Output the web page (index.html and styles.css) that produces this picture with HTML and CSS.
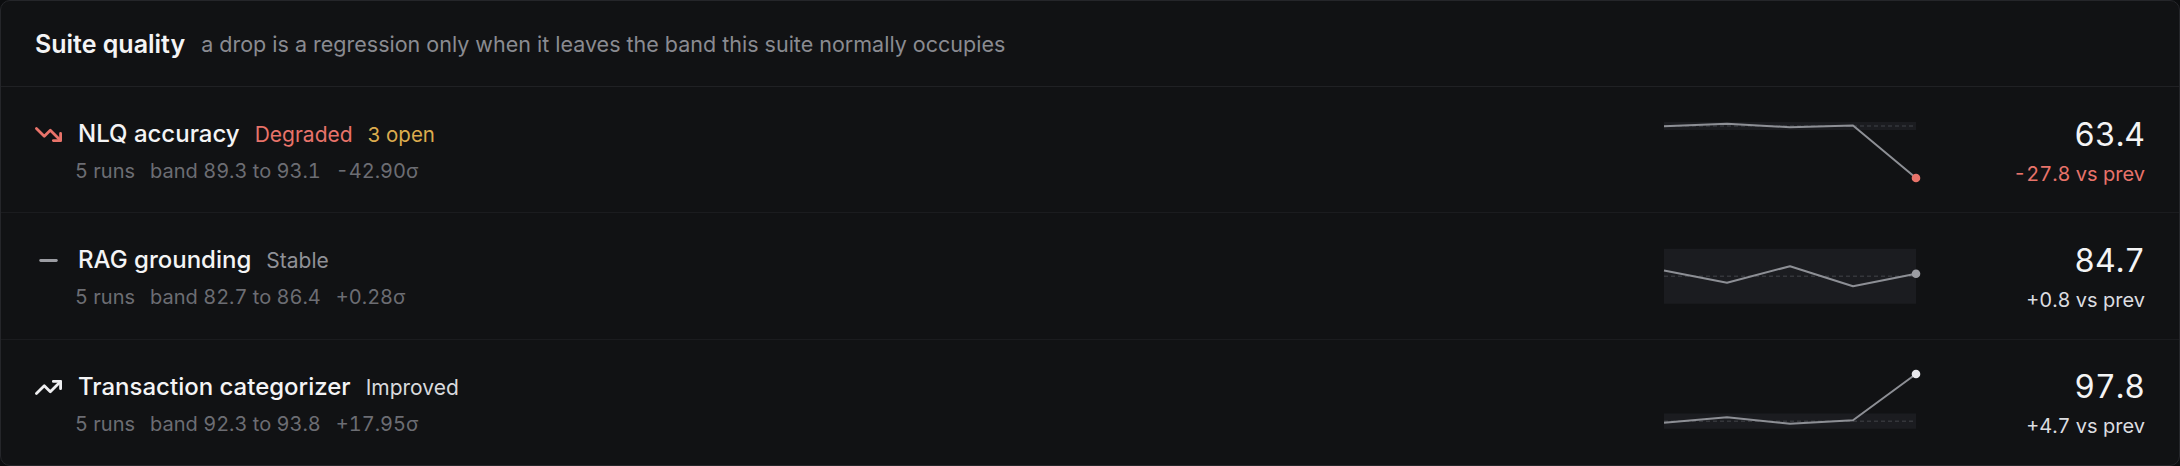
FILE: index.html
```html
<html>
	<head>
		<meta charset="utf-8">
		<link rel="stylesheet" href="styles.css">
	</head>
	<body>
		<div class="card">
			<div class="card-head">
				<span class="card-title">Suite quality</span>
				<span class="card-sub">a drop is a regression only when it leaves the band this suite normally occupies</span>
			</div>

			<!-- NLQ -->
			<div class="suite">
				<div class="suite-main">
					<svg class="trend trend-bad" viewBox="0 0 24 24"><polyline points="22 17 13.5 8.5 8.5 13.5 2 7"/><polyline points="16 17 22 17 22 11"/></svg>
					<div class="suite-line">
						<span class="suite-name">NLQ accuracy</span>
						<span class="status status-bad">Degraded</span>
						<span class="open">3 open</span>
					</div>
					<div class="suite-meta"><span>5 runs</span><span>band 89.3 to 93.1</span><span>-42.90σ</span></div>
				</div>
				<svg class="spark" viewBox="0 0 260 64">
					<rect class="band" x="4" y="4" width="252" height="8"/>
					<line class="mid" x1="4" y1="8" x2="256" y2="8"/>
					<polyline class="line" points="4,8.2 67,5.8 130,9.2 193,7.5 256,60"/>
					<circle class="dot-bad" cx="256" cy="60" r="4.3"/>
				</svg>
				<div class="suite-val">
					<div class="val">63.4</div>
					<div class="delta delta-bad">-27.8 vs prev</div>
				</div>
			</div>

			<!-- RAG -->
			<div class="suite">
				<div class="suite-main">
					<svg class="trend trend-flat" viewBox="0 0 24 24"><path d="M5.5 12h13"/></svg>
					<div class="suite-line">
						<span class="suite-name">RAG grounding</span>
						<span class="status status-flat">Stable</span>
					</div>
					<div class="suite-meta"><span>5 runs</span><span>band 82.7 to 86.4</span><span>+0.28σ</span></div>
				</div>
				<svg class="spark" viewBox="0 0 260 64">
					<rect class="band" x="4" y="4.8" width="252" height="55"/>
					<line class="mid" x1="4" y1="32.2" x2="256" y2="32.2"/>
					<polyline class="line" points="4,26.5 67,38.8 130,22.2 193,42.2 256,29.8"/>
					<circle class="dot-flat" cx="256" cy="29.8" r="4.3"/>
				</svg>
				<div class="suite-val">
					<div class="val">84.7</div>
					<div class="delta">+0.8 vs prev</div>
				</div>
			</div>

			<!-- Transactions -->
			<div class="suite">
				<div class="suite-main">
					<svg class="trend trend-good" viewBox="0 0 24 24"><polyline points="22 7 13.5 15.5 8.5 10.5 2 17"/><polyline points="16 7 22 7 22 13"/></svg>
					<div class="suite-line">
						<span class="suite-name">Transaction categorizer</span>
						<span class="status status-good">Improved</span>
					</div>
					<div class="suite-meta"><span>5 runs</span><span>band 92.3 to 93.8</span><span>+17.95σ</span></div>
				</div>
				<svg class="spark" viewBox="0 0 260 64">
					<rect class="band" x="4" y="43.5" width="252" height="15.3"/>
					<line class="mid" x1="4" y1="51.2" x2="256" y2="51.2"/>
					<polyline class="line" points="4,52.8 67,47.2 130,53.8 193,50.2 256,4"/>
					<circle class="dot-good" cx="256" cy="4" r="4.3"/>
				</svg>
				<div class="suite-val">
					<div class="val">97.8</div>
					<div class="delta">+4.7 vs prev</div>
				</div>
			</div>
		</div>
	</body>
</html>
```

FILE: styles.css
```css
body {
	margin: 0;
	background-color: #0c0d0f;
	font-family: Inter, "Noto Sans", sans-serif;
	color: #f1f1f3;
}
.card {
	box-sizing: border-box;
	height: 466px;
	display: flex;
	flex-direction: column;
	background-color: #111214;
	border: 1px solid #25262a;
	border-radius: 10px;
	overflow: hidden;
}
.card-head {
	height: 85px;
	flex: none;
	display: flex;
	align-items: center;
	gap: 16px;
	padding: 0 33px 0 34px;
	border-bottom: 1px solid #202124;
}
.card-title {
	font-size: 25px;
	font-weight: 600;
	color: #f4f4f5;
}
.card-sub {
	font-size: 21.5px;
	color: #8a8b91;
}
.suite {
	flex: 1;
	display: flex;
	align-items: center;
	padding: 0 34px 0 33px;
	border-bottom: 1px solid #1b1c1f;
}
.suite:last-child {
	border-bottom: none;
}
.suite-main {
	flex: 1;
	display: grid;
	grid-template-columns: 29px auto;
	column-gap: 15px;
	row-gap: 10px;
	align-items: center;
	justify-content: start;
	margin-top: 4px;
}
.trend {
	width: 29px;
	height: 29px;
	fill: none;
	stroke-width: 2.3;
	stroke-linecap: round;
	stroke-linejoin: round;
}
.trend-bad { stroke: #e8736a; }
.trend-flat { stroke: #9b9ca2; }
.trend-good { stroke: #eeeef0; }
.suite-line {
	display: flex;
	align-items: baseline;
	gap: 15px;
	line-height: 28px;
}
.suite-name {
	font-size: 24px;
	font-weight: 500;
	color: #f4f4f5;
}
.status {
	font-size: 21px;
}
.status-bad { color: #e8736a; }
.status-flat { color: #909197; }
.status-good { color: #d9dade; }
.open {
	font-size: 20.5px;
	color: #dcac4e;
}
.suite-meta {
	grid-column: 2;
	display: flex;
	gap: 15px;
	margin-left: -3px;
	font-size: 20px;
	line-height: 24px;
	color: #6c6d73;
	font-variant-numeric: tabular-nums;
}
.spark {
	width: 260px;
	height: 64px;
	flex: none;
	overflow: visible;
}
.band { fill: #1b1c20; }
.mid {
	stroke: #35363b;
	stroke-width: 1.5;
	stroke-dasharray: 4 3;
}
.line {
	fill: none;
	stroke: #8d8f95;
	stroke-width: 2;
	stroke-linejoin: round;
}
.dot-bad { fill: #e8736a; }
.dot-flat { fill: #9b9ca2; }
.dot-good { fill: #e8e8ec; }
.suite-val {
	width: 225px;
	flex: none;
	text-align: right;
	font-variant-numeric: tabular-nums;
}
.val {
	font-size: 32px;
	line-height: 36px;
	color: #f4f4f5;
	margin-top: 2px;
}
.delta {
	font-size: 20px;
	line-height: 22px;
	margin-top: 10px;
	color: #dcdde0;
}
.delta-bad { color: #e8736a; }
```
